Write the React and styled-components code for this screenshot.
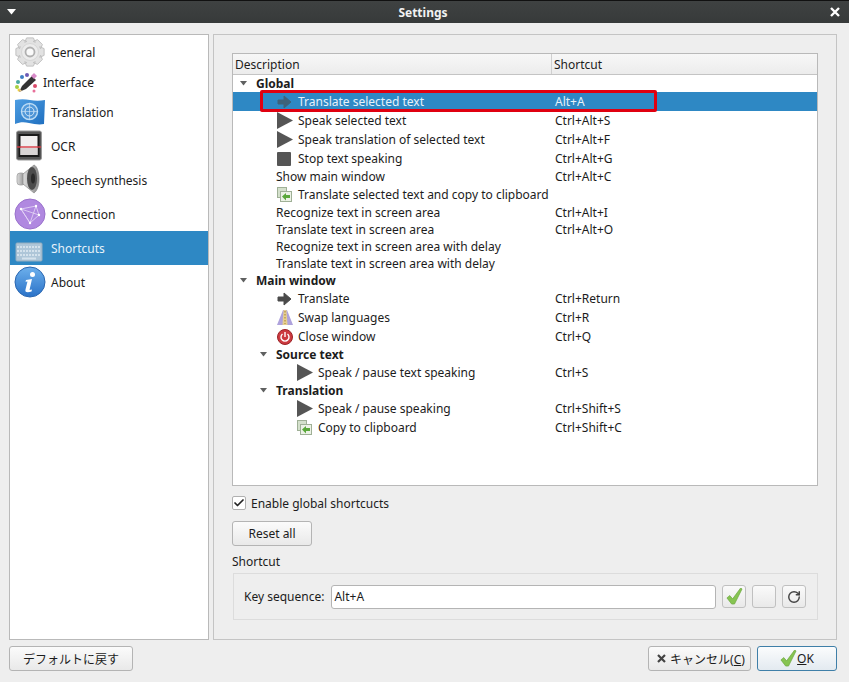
import React from 'react'
import styled, { createGlobalStyle } from 'styled-components'
import { Check, RotateCw } from 'lucide-react'

const GlobalStyle = createGlobalStyle`
  html, body { margin: 0; padding: 0; background: #eeeeee; }
  body { font-family: "Noto Sans", "Noto Sans CJK JP", sans-serif; font-size: 12px; color: #1c1c1c; }
`

const Window = styled.div`
  width: 849px;
  height: 682px;
  display: flex;
  flex-direction: column;
  overflow: hidden;
  background: #eeeeee;
`
const TitleBar = styled.div`
  height: 22px;
  flex: none;
  border-top: 1px solid #111;
  background: linear-gradient(#3f4242, #373a3a);
  display: flex;
  align-items: center;
  justify-content: space-between;
  padding: 0 9px 0 7px;
  color: #f2f2f2;
  font-weight: 700;
`
const Main = styled.div`
  height: 606px;
  flex: none;
  margin-top: 11px;
  padding: 0 12px 0 9px;
  display: flex;
  gap: 4px;
`
const Sidebar = styled.div`
  width: 198px;
  flex: none;
  background: #fff;
  border: 1px solid #b9b9b9;
`
const NavItem = styled.div`
  height: ${p => p.$short ? 26 : 34}px;
  display: flex;
  align-items: center;
  padding-left: 4px;
  gap: 5px;
  background: ${p => p.$active ? '#2e88c4' : 'transparent'};
  color: ${p => p.$active ? '#e6f2fa' : '#1c1c1c'};
  svg { flex: none; }
`
const Panel = styled.div`
  flex: 1;
  border: 1px solid #c4c4c4;
  padding: 18px 18px 0 18px;
  display: flex;
  flex-direction: column;
`
const Tree = styled.div`
  height: 431px;
  flex: none;
  background: #fff;
  border: 1px solid #b9b9b9;
`
const HeaderRow = styled.div`
  height: 20px;
  display: grid;
  grid-template-columns: 318px 1fr;
  background: linear-gradient(#f7f7f7, #ececec);
  border-bottom: 1px solid #c4c4c4;
`
const HeaderCell = styled.div`
  display: flex;
  align-items: center;
  padding-left: 2px;
  & + & { border-left: 1px solid #cfcfcf; }
`
const Row = styled.div`
  position: relative;
  height: ${p => p.$tall ? 19 : 17}px;
  display: grid;
  grid-template-columns: 318px 1fr;
  align-items: center;
  background: ${p => p.$selected ? '#2e88c4' : 'transparent'};
  color: ${p => p.$selected ? '#e6f2fa' : '#1c1c1c'};
`
const NameCell = styled.div`
  display: flex;
  align-items: center;
  white-space: nowrap;
  padding-left: ${p => p.$depth * 20 + 3}px;
  font-weight: ${p => p.$bold ? 700 : 400};
`
const Expander = styled.span`
  width: 20px;
  flex: none;
  display: flex;
`
const RowIcon = styled.span`
  width: 22px;
  box-sizing: border-box;
  padding-left: 1px;
  flex: none;
  display: flex;
  align-items: center;
  opacity: ${p => p.$dim ? 0.6 : 1};
`
const KeyCell = styled.div`
  padding-left: 4px;
`
const Highlight = styled.div`
  position: absolute;
  left: 27px;
  top: -2px;
  width: 397px;
  height: 22px;
  box-sizing: border-box;
  border: 3px solid #e00010;
  border-radius: 2px;
  pointer-events: none;
`
const CheckLine = styled.label`
  display: flex;
  align-items: center;
  gap: 5px;
  margin-top: 10px;
  height: 14px;
`
const CheckBox = styled.span`
  width: 12px;
  height: 12px;
  border: 1px solid #b0b0b0;
  border-radius: 2px;
  background: #fff;
  display: flex;
  align-items: center;
  justify-content: center;
`
const Button = styled.button`
  font: inherit;
  color: #1c1c1c;
  box-sizing: border-box;
  width: ${p => p.$w}px;
  height: 25px;
  padding: 0 0 0 ${p => p.$pad || 0}px;
  display: flex;
  align-items: center;
  justify-content: center;
  gap: ${p => p.$gap || 0}px;
  border: 1px solid ${p => p.$primary ? '#3f7fa8' : '#b4b4b4'};
  border-radius: 3px;
  background: ${p => p.$primary ? 'linear-gradient(#fbfcfd, #e3eaf0)' : 'linear-gradient(#fbfbfb, #e9e9e9)'};
`
const ResetRow = styled.div`
  margin-top: 11px;
`
const GroupTitle = styled.div`
  margin-top: 8px;
  height: 16px;
  line-height: 16px;
`
const GroupBox = styled.div`
  margin: 3px 0 0 1px;
  height: 47px;
  width: 585px;
  box-sizing: border-box;
  border: 1px solid #dcdcdc;
  display: flex;
  align-items: center;
  padding: 0 11px 0 10px;
`
const FieldLabel = styled.span`
  margin-right: 7px;
  white-space: nowrap;
`
const Input = styled.div`
  width: 385px;
  height: 24px;
  box-sizing: border-box;
  border: 1px solid #b4b4b4;
  border-radius: 3px;
  background: #fff;
  padding-left: 2px;
  display: flex;
  align-items: center;
`
const ToolButton = styled.button`
  width: 24px;
  height: 23px;
  margin-left: 6px;
  padding: 0;
  box-sizing: border-box;
  display: flex;
  align-items: center;
  justify-content: center;
  color: #444;
  border: 1px solid #c0c0c0;
  border-radius: 3px;
  background: linear-gradient(#fafafa, #e9e9e9);
`
const Footer = styled.div`
  margin-top: 6px;
  padding: 0 12px 0 9px;
  display: flex;
  align-items: flex-start;
  gap: 6px;
`
const Spacer = styled.div`
  flex: 1;
`
const Key = styled.span`
  text-decoration: underline;
`

const TriDown = () => (
  <svg width="9" height="6" viewBox="0 0 9 6"><path d="M0 0h9L4.500 5.500z" fill="#fff" /></svg>
)
const CloseX = () => (
  <svg width="10" height="10" viewBox="0 0 10 10"><path d="M1 1l8 8M9 1l-8 8" stroke="#fff" strokeWidth="2.400" /></svg>
)
const Arrow = () => (
  <svg width="7" height="5" viewBox="0 0 7 5" style={{ marginLeft: 4 }}><path d="M0 0h7L3.500 4.500z" fill="#5f6060" /></svg>
)

// eight toothed wheel around 16,16
const gearPath = () => {
  const pts = []
  for (let i = 0; i < 8; i++) {
    const a = (i * Math.PI) / 4
    ;[[-0.5, 11], [-0.24, 14.500], [0.24, 14.500], [0.5, 11]].forEach(([d, r]) => {
      pts.push(`${(16 + r * Math.sin(a + d)).toFixed(1)} ${(16 - r * Math.cos(a + d)).toFixed(1)}`)
    })
  }
  return 'M' + pts.join('L') + 'z'
}

const GearIcon = () => (
  <svg width="32" height="32" viewBox="0 0 32 32">
    <path d={gearPath()} fill="#e2e2e2" stroke="#c2c2c2" />
    <circle cx="16" cy="16" r="8.500" fill="#ececec" stroke="#d6d6d6" />
    <circle cx="16" cy="16" r="4.500" fill="#fafafa" stroke="#b0b0b0" strokeWidth="1.800" />
  </svg>
)
const PaletteIcon = () => (
  <svg width="24" height="26" viewBox="0 0 24 26">
    <circle cx="4" cy="13" r="2" fill="#4aa8a0" /><circle cx="8" cy="8" r="2" fill="#3f7fc4" />
    <circle cx="13" cy="6" r="2" fill="#6d5bb5" /><circle cx="3" cy="18" r="2" fill="#a5d040" />
    <circle cx="21" cy="17" r="2" fill="#d84a6a" /><circle cx="20" cy="22" r="1.500" fill="#e8709a" />
    <circle cx="5" cy="21" r="1.500" fill="#f0d040" />
    <path d="M5 23l3-6L18 7l4 4-10 9z" fill="#333" />
    <path d="M17 7l3-3 3 3-3 3z" fill="#d88ac8" />
    <path d="M5 23l1-3 2 2z" fill="#e8c890" />
  </svg>
)
const FlagIcon = () => (
  <svg width="32" height="32" viewBox="0 0 32 32">
    <defs>
      <linearGradient id="flag" x1="0" y1="0" x2="1" y2="1"><stop offset="0" stopColor="#4e9ee2" /><stop offset="1" stopColor="#1f6fc0" /></linearGradient>
    </defs>
    <path d="M1 4C6 3 11 3 16 4s10 1 15 0l-1 24c-5 1-10 0-15-1s-9-1-14 1z" fill="url(#flag)" />
    <circle cx="15.500" cy="15.500" r="8" fill="#6aa8e0" opacity=".5" />
    <circle cx="15.500" cy="15.500" r="8" fill="none" stroke="#bcdcf5" strokeWidth="1.400" />
    <circle cx="15.500" cy="15.500" r="4.500" fill="none" stroke="#d4e8f8" />
    <path d="M15.500 7.500v16M7.500 15.500h16" stroke="#d4e8f8" strokeWidth=".6" />
  </svg>
)
const OcrIcon = () => (
  <svg width="32" height="32" viewBox="0 0 32 32">
    <rect x="2.500" y="1" width="25" height="29" rx="2" fill="#555" stroke="#999" />
    <rect x="5.500" y="5" width="19" height="21" fill="#f0eeee" stroke="#1a1a1a" strokeWidth="2" />
    <path d="M3 17h24" stroke="#d83a44" strokeWidth="1.400" />
    <rect x="6.500" y="18" width="17" height="7" fill="#d8d4d4" />
  </svg>
)
const SpeakerIcon = () => (
  <svg width="32" height="32" viewBox="0 0 32 32">
    <defs>
      <linearGradient id="spk" x1="0" y1="0" x2="1" y2="0"><stop offset="0" stopColor="#dcdcdc" /><stop offset="1" stopColor="#888" /></linearGradient>
    </defs>
    <rect x="3" y="9" width="8" height="12" rx="3" fill="url(#spk)" stroke="#999" strokeWidth=".7" />
    <path d="M9 10L20 1c3 1 5 7 5 14s-2 12-5 14L9 20z" fill="url(#spk)" stroke="#8a8a8a" strokeWidth=".7" />
    <ellipse cx="18" cy="14.500" rx="5" ry="11.500" fill="#4c4c4c" />
    <ellipse cx="19" cy="14.500" rx="2" ry="5" fill="#2a2a2a" />
  </svg>
)
const GlobeIcon = () => (
  <svg width="32" height="32" viewBox="0 0 32 32">
    <circle cx="16" cy="16" r="15" fill="#b088e0" stroke="#9a72cc" />
    <path d="M7 11l15-3 3 9-9 8zM7 11l9 14M22 8l-6 17M25 17L7 11" fill="none" stroke="#e6d8f6" strokeWidth=".8" />
    <circle cx="7" cy="11" r="1.200" fill="#fff" /><circle cx="22" cy="8" r="1.200" fill="#fff" />
    <circle cx="25" cy="17" r="1.200" fill="#fff" /><circle cx="16" cy="25" r="1.200" fill="#fff" />
  </svg>
)
const KeyboardIcon = () => (
  <svg width="32" height="32" viewBox="0 0 32 32">
    <rect x="2" y="11" width="26" height="18" rx="1" fill="#aec6d8" stroke="#93adc0" />
    <path d="M3 15h24M3 19h24M3 23h24" stroke="#d4e2ec" strokeWidth="2" strokeDasharray="2 1" />
    <path d="M8 26.500h14" stroke="#d4e2ec" strokeWidth="2" />
  </svg>
)
const InfoIcon = () => (
  <svg width="32" height="32" viewBox="0 0 32 32">
    <defs>
      <linearGradient id="info" x1="0" y1="0" x2="0" y2="1"><stop offset="0" stopColor="#6db0ec" /><stop offset="1" stopColor="#2a72c8" /></linearGradient>
    </defs>
    <circle cx="16" cy="16" r="15" fill="url(#info)" stroke="#2a66b0" />
    <circle cx="18.500" cy="8.500" r="2.500" fill="#fff" />
    <path d="M12 14l6-1-2.500 11 2.500-.5-.5 2c-3 1-7 1.500-6-2l2-8-2 .3z" fill="#fff" />
  </svg>
)

const ArrowIcon = () => (
  <svg width="16" height="16" viewBox="0 0 16 16"><path d="M1 6h6V2l7 6-7 6v-4H1z" fill="#4a4a4a" stroke="#4a4a4a" strokeLinejoin="round" /></svg>
)
const PlayIcon = () => (
  <svg width="17" height="17" viewBox="0 0 17 17"><path d="M0 0l16 8.500L0 17z" fill="#555" /></svg>
)
const StopIcon = () => (
  <svg width="16" height="16" viewBox="0 0 16 16"><rect x="0" y="1" width="14" height="14" rx="1" fill="#555" /></svg>
)
const CopyIcon = () => (
  <svg width="16" height="16" viewBox="0 0 16 16">
    <rect x=".5" y=".5" width="9" height="10" fill="#d4e0cc" stroke="#9fb096" />
    <rect x="3.500" y="4.500" width="11" height="10" fill="#ecf2e6" stroke="#9fb096" />
    <path d="M5 9.500L9 6v2h4v3H9v2.500z" fill="#5aa83a" />
  </svg>
)
const SwapIcon = () => (
  <svg width="16" height="17" viewBox="0 0 16 17">
    <path d="M0 16L6 1h4l6 15z" fill="#aea2dc" />
    <path d="M6.500 1h3l1 15h-5z" fill="#e6cf92" />
    <path d="M8 2v13" stroke="#a8842a" strokeDasharray="1.500 1.500" />
  </svg>
)
const PowerIcon = () => (
  <svg width="16" height="16" viewBox="0 0 16 16">
    <circle cx="8" cy="8" r="7.500" fill="#cc3a40" stroke="#9c2226" />
    <path d="M5.500 5a4 4 0 1 0 5 0" fill="none" stroke="#fff" strokeWidth="1.400" />
    <path d="M8 3v5" stroke="#fff" strokeWidth="1.400" />
  </svg>
)
const GreenCheck = ({ size }) => (
  <svg width={size} height={size} viewBox="0 0 18 18">
    <path d="M1 10.500l3-2.500 3 3.500L15.500 0l1.500 1-8 16H6z" fill="#86c452" stroke="#6aa63c" strokeWidth=".7" />
  </svg>
)
const CrossIcon = () => (
  <svg width="9" height="9" viewBox="0 0 9 9"><path d="M1 1l7 7M8 1L1 8" stroke="#444" strokeWidth="2.200" /></svg>
)

const navItems = [
  { label: 'General', icon: <GearIcon /> },
  { label: 'Interface', icon: <PaletteIcon />, short: true },
  { label: 'Translation', icon: <FlagIcon /> },
  { label: 'OCR', icon: <OcrIcon /> },
  { label: 'Speech synthesis', icon: <SpeakerIcon /> },
  { label: 'Connection', icon: <GlobeIcon /> },
  { label: 'Shortcuts', icon: <KeyboardIcon />, active: true },
  { label: 'About', icon: <InfoIcon /> },
]

const rows = [
  { name: 'Global', depth: 0, group: true },
  { name: 'Translate selected text', depth: 1, icon: <ArrowIcon />, keys: 'Alt+A', selected: true },
  { name: 'Speak selected text', depth: 1, icon: <PlayIcon />, keys: 'Ctrl+Alt+S' },
  { name: 'Speak translation of selected text', depth: 1, icon: <PlayIcon />, keys: 'Ctrl+Alt+F' },
  { name: 'Stop text speaking', depth: 1, icon: <StopIcon />, keys: 'Ctrl+Alt+G' },
  { name: 'Show main window', depth: 1, keys: 'Ctrl+Alt+C' },
  { name: 'Translate selected text and copy to clipboard', depth: 1, icon: <CopyIcon /> },
  { name: 'Recognize text in screen area', depth: 1, keys: 'Ctrl+Alt+I' },
  { name: 'Translate text in screen area', depth: 1, keys: 'Ctrl+Alt+O' },
  { name: 'Recognize text in screen area with delay', depth: 1 },
  { name: 'Translate text in screen area with delay', depth: 1 },
  { name: 'Main window', depth: 0, group: true },
  { name: 'Translate', depth: 1, icon: <ArrowIcon />, keys: 'Ctrl+Return' },
  { name: 'Swap languages', depth: 1, icon: <SwapIcon />, keys: 'Ctrl+R' },
  { name: 'Close window', depth: 1, icon: <PowerIcon />, keys: 'Ctrl+Q' },
  { name: 'Source text', depth: 1, group: true },
  { name: 'Speak / pause text speaking', depth: 2, icon: <PlayIcon />, keys: 'Ctrl+S' },
  { name: 'Translation', depth: 1, group: true },
  { name: 'Speak / pause speaking', depth: 2, icon: <PlayIcon />, keys: 'Ctrl+Shift+S' },
  { name: 'Copy to clipboard', depth: 2, icon: <CopyIcon />, keys: 'Ctrl+Shift+C' },
]

const App = () => {
  return (
    <Window>
      <GlobalStyle />
      <TitleBar>
        <TriDown />
        <span>Settings</span>
        <CloseX />
      </TitleBar>
      <Main>
        <Sidebar>
          {navItems.map(item => (
            <NavItem key={item.label} $short={item.short} $active={item.active}>
              {item.icon}
              <span>{item.label}</span>
            </NavItem>
          ))}
        </Sidebar>
        <Panel>
          <Tree>
            <HeaderRow>
              <HeaderCell>Description</HeaderCell>
              <HeaderCell>Shortcut</HeaderCell>
            </HeaderRow>
            {rows.map(row => (
              <Row key={row.name + row.depth} $tall={!!row.icon} $selected={row.selected}>
                <NameCell $depth={row.depth} $bold={row.group}>
                  <Expander>{row.group && <Arrow />}</Expander>
                  {row.icon && <RowIcon $dim={row.selected}>{row.icon}</RowIcon>}
                  {row.name}
                </NameCell>
                <KeyCell>{row.keys}</KeyCell>
                {row.selected && <Highlight />}
              </Row>
            ))}
          </Tree>
          <CheckLine>
            <CheckBox><Check size={12} strokeWidth={3.500} color="#222" /></CheckBox>
            Enable global shortcucts
          </CheckLine>
          <ResetRow>
            <Button $w={80}>Reset all</Button>
          </ResetRow>
          <GroupTitle>Shortcut</GroupTitle>
          <GroupBox>
            <FieldLabel>Key sequence:</FieldLabel>
            <Input>Alt+A</Input>
            <ToolButton><GreenCheck size={17} /></ToolButton>
            <ToolButton />
            <ToolButton><RotateCw size={14} strokeWidth={2.500} /></ToolButton>
          </GroupBox>
        </Panel>
      </Main>
      <Footer>
        <Button $w={124}>デフォルトに戻す</Button>
        <Spacer />
        <Button $w={103} $gap={4} $pad={3}><CrossIcon /><span>キャンセル(<Key>C</Key>)</span></Button>
        <Button $w={80} $primary><GreenCheck size={17} /><span><Key>O</Key>K</span></Button>
      </Footer>
    </Window>
  )
}

export default App
